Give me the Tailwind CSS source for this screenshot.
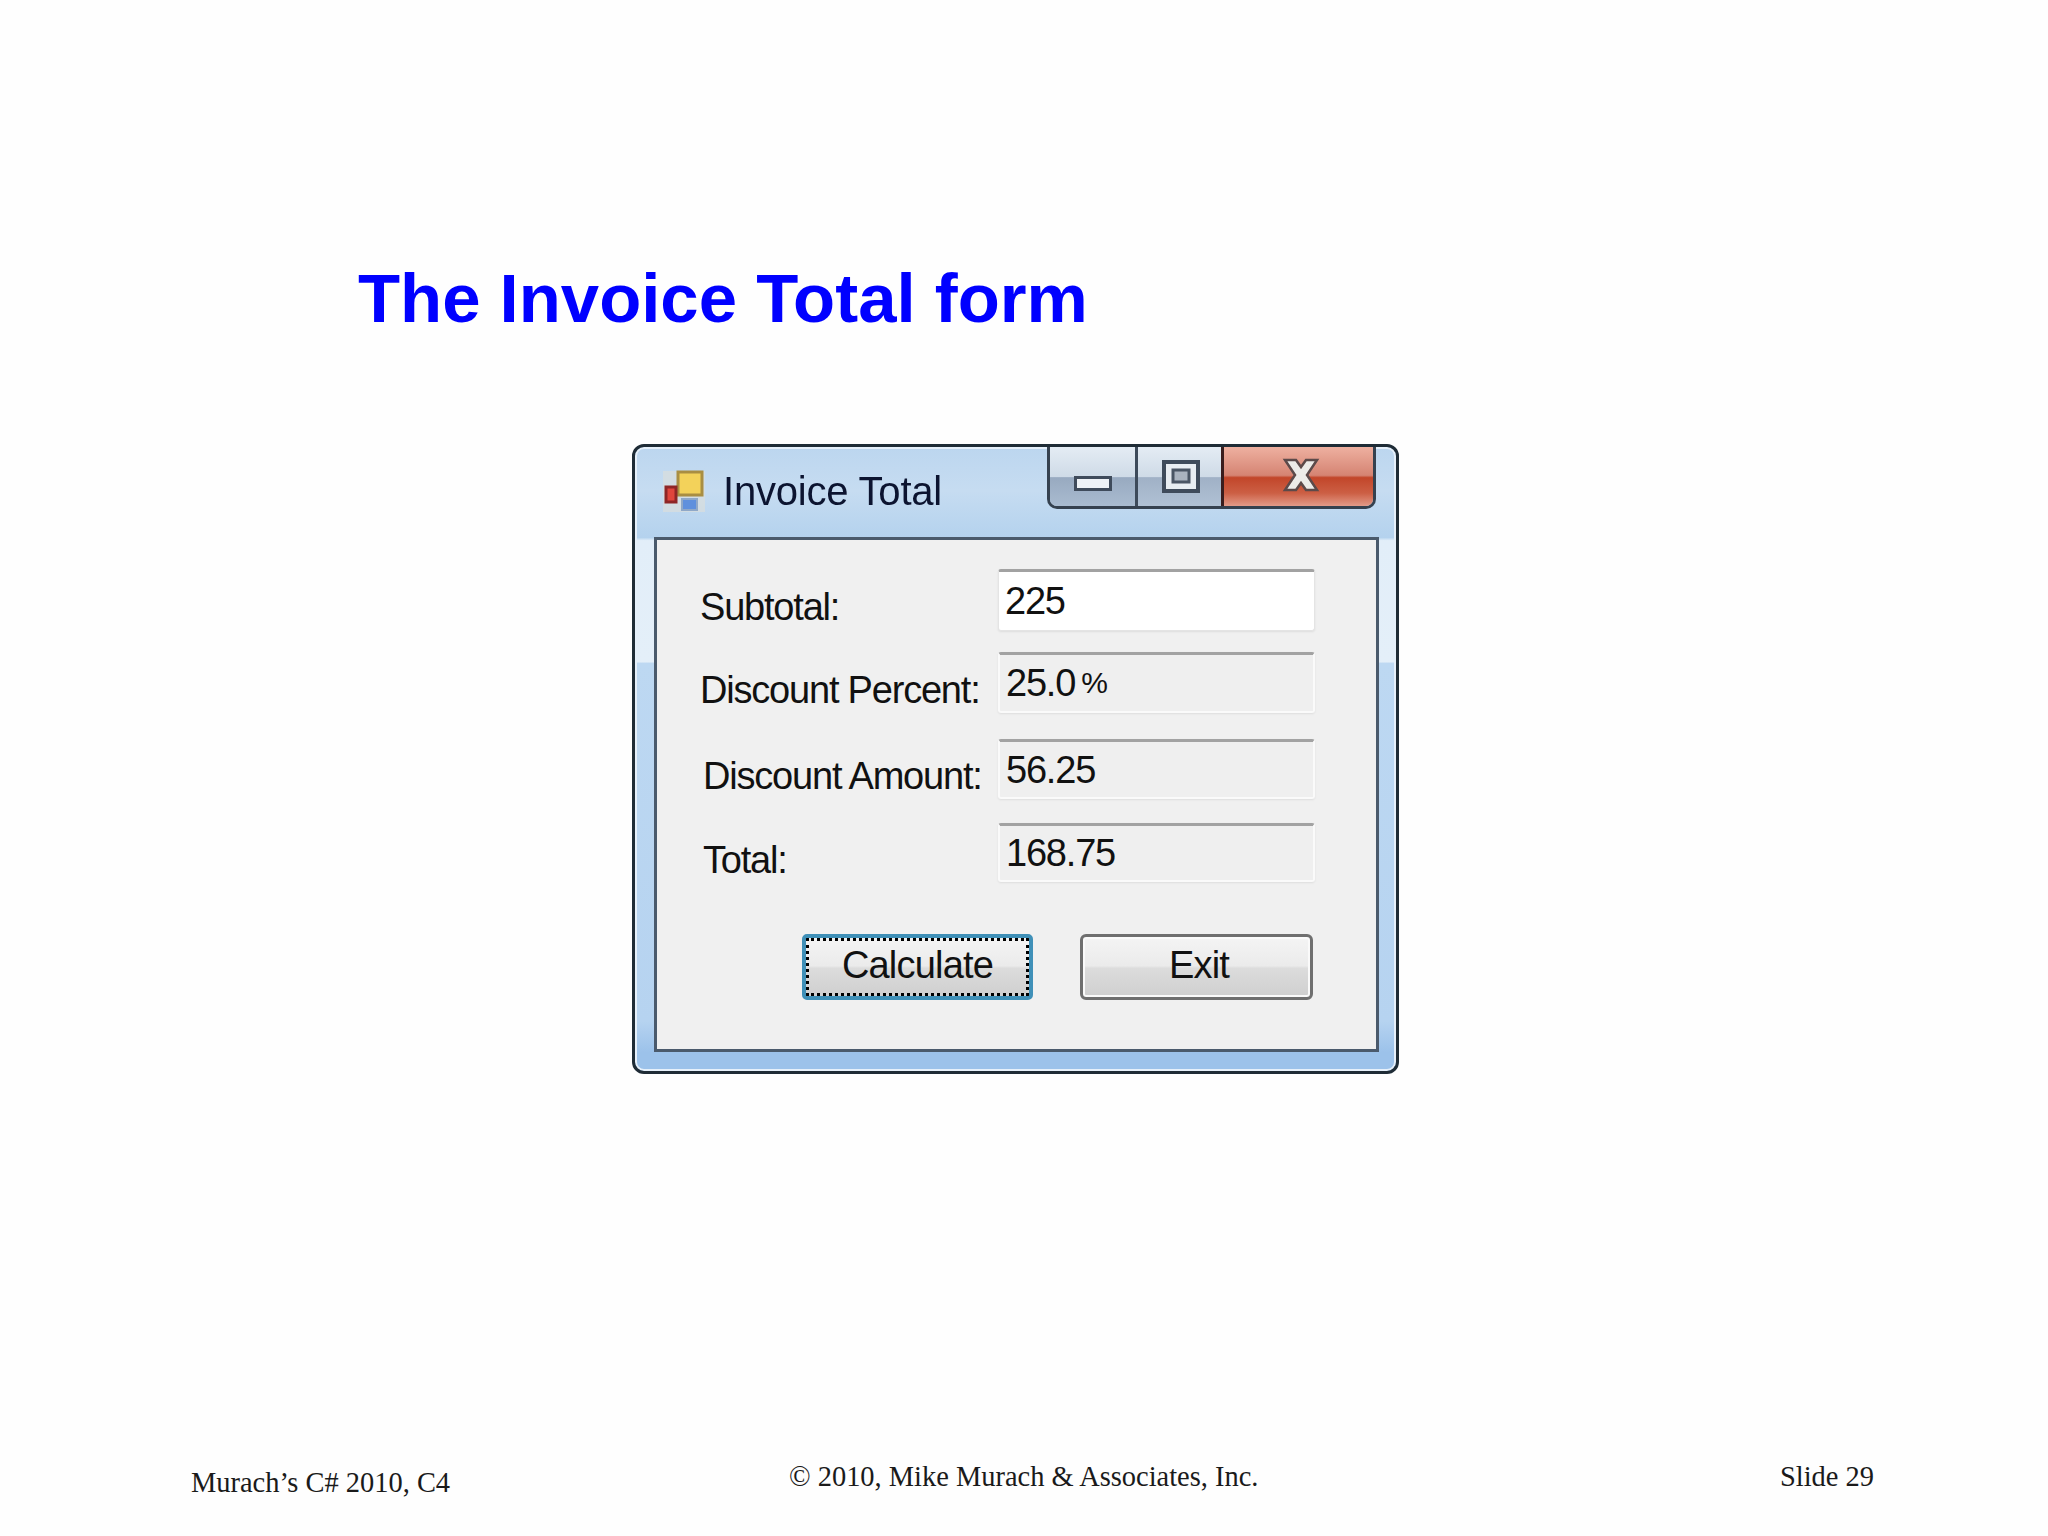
<!DOCTYPE html>
<html>
<head>
<meta charset="utf-8">
<script src="https://cdn.jsdelivr.net/npm/@tailwindcss/browser@4"></script>
</head>
<body class="m-0 bg-[#fefefe]">
<div class="flex h-[1536px] w-[2048px] flex-col bg-[#fefefe] font-['Liberation_Sans',Arial,sans-serif]">
  <h1 class="ml-[358px] mt-[259px] text-[68.9px] font-bold leading-[80px] text-[#0000ff]">The Invoice Total form</h1>

  <div class="ml-[632px] mt-[105px] flex h-[630px] w-[767px] flex-col rounded-[12px] border-[3px] border-[#1f2c36] bg-[linear-gradient(180deg,#bcd6ef_0%,#c6dcf1_7%,#b4d2ee_14.5%,#e2eef9_15%,#e4eff9_34.4%,#bdd8f2_34.7%,#b6d3f0_92%,#9cc2ea_97%,#9cc2ea_100%)] pl-[19px] pr-[17px] text-[#111111] shadow-[inset_0_0_0_2px_#e6f0fa] blur-[0.7px]">
    <div class="flex h-[90px] shrink-0 items-start justify-between">
      <div class="mt-[22px] flex items-center">
        <svg class="ml-[8px] h-[44px] w-[44px]" viewBox="0 0 44 44">
          <rect x="1" y="2" width="42" height="41" fill="#d8dedd" opacity="0.75"/>
          <rect x="16" y="3" width="24" height="23" fill="#f3d25a" stroke="#a98e42" stroke-width="3"/>
          <rect x="4" y="18" width="10" height="15" fill="#e0453c" stroke="#8e2626" stroke-width="3"/>
          <rect x="20" y="30" width="15" height="11" fill="#5f90dd" stroke="#8fa8c8" stroke-width="2"/>
        </svg>
        <span class="ml-[17px] text-[40px] leading-[44px] tracking-[-0.2px] text-[#0c1430]">Invoice Total</span>
      </div>
      <div class="mr-[3px] flex h-[62px] w-[329px] overflow-hidden rounded-b-[10px] border-x-[3px] border-b-[3px] border-[#35414f]">
        <div class="flex w-[88px] items-end justify-center border-r-[3px] border-[#3d4a5a] bg-[linear-gradient(180deg,#e4ecf4_0%,#cfdbe7_50%,#98aac0_52%,#a9bbd0_100%)] pb-[15px]">
          <svg class="h-[15px] w-[38px]" viewBox="0 0 38 15"><rect x="1.5" y="1.5" width="35" height="12" fill="#eef2f6" stroke="#3f4b5b" stroke-width="3"/></svg>
        </div>
        <div class="flex w-[86px] items-start justify-center border-r-[3px] border-[#3a1d1d] bg-[linear-gradient(180deg,#e4ecf4_0%,#cfdbe7_50%,#a0b1c6_52%,#b0c1d4_100%)] pl-[3px] pt-[13px]">
          <svg class="h-[33px] w-[38px]" viewBox="0 0 38 33"><rect x="2" y="2" width="34" height="29" fill="#e8edf2" stroke="#3f4b5b" stroke-width="4"/><rect x="11" y="10" width="16" height="12" fill="#aab3bf" stroke="#4a5564" stroke-width="3"/></svg>
        </div>
        <div class="flex flex-1 items-start justify-center bg-[linear-gradient(180deg,#eeb0a0_0%,#d58473_48%,#c2462a_52%,#cc5f44_78%,#e39a88_100%)] pl-[5px] pt-[11px]">
          <svg class="h-[34px] w-[38px]" viewBox="0 0 36 34"><path d="M2 2H13L18 9L23 2H34L24 17L34 32H23L18 25L13 32H2L12 17Z" fill="#ecebe8" stroke="#5c4a4a" stroke-width="2.5"/></svg>
        </div>
      </div>
    </div>

    <div class="flex h-[515px] flex-col border-[3px] border-[#4a5a6c] bg-[#f0f0f0] pl-[43px] text-[38px] leading-[40px] tracking-[-1.2px]">
      <div class="mt-[29px] flex h-[62px]">
        <span class="mt-[18px] w-[298px] shrink-0">Subtotal:</span>
        <div class="flex w-[317px] items-center rounded-[3px] border border-[#e4e4e4] border-t-[3px] border-t-[#a2a2a2] bg-white pl-[6px] shadow-[0_1px_2px_#dddddd]">225</div>
      </div>
      <div class="mt-[21px] flex h-[61px]">
        <span class="mt-[18px] w-[298px] shrink-0">Discount Percent:</span>
        <div class="flex w-[317px] items-center gap-[6px] rounded-[3px] border-[2px] border-[#fafafa] border-t-[3px] border-t-[#a2a2a2] bg-[#efefef] pl-[6px] shadow-[0_1px_2px_#dddddd]"><span>25.0</span><span class="text-[30px]">%</span></div>
      </div>
      <div class="mt-[26px] flex h-[60px]">
        <span class="mt-[17px] w-[298px] shrink-0 pl-[3px]">Discount Amount:</span>
        <div class="flex w-[317px] items-center rounded-[3px] border-[2px] border-[#fafafa] border-t-[3px] border-t-[#a2a2a2] bg-[#efefef] pl-[6px] shadow-[0_1px_2px_#dddddd]">56.25</div>
      </div>
      <div class="mt-[24px] flex h-[59px]">
        <span class="mt-[17px] w-[298px] shrink-0 pl-[3px]">Total:</span>
        <div class="flex w-[317px] items-center rounded-[3px] border-[2px] border-[#fafafa] border-t-[3px] border-t-[#a2a2a2] bg-[#efefef] pl-[6px] shadow-[0_1px_2px_#dddddd]">168.75</div>
      </div>
      <div class="ml-[102px] mt-[52px] flex gap-[47px] tracking-[-0.8px]">
        <div class="flex h-[66px] w-[231px] items-center justify-center rounded-[5px] border-[4px] border-[#3f90b8] bg-[linear-gradient(180deg,#f4f4f4_0%,#ebebeb_48%,#dcdcdc_52%,#cfcfcf_100%)] pb-[4px] outline-[3px] outline-offset-[-7px] outline-black outline-dotted">Calculate</div>
        <div class="flex h-[66px] w-[233px] items-center justify-center rounded-[6px] border-[3px] border-[#6f6f6f] bg-[linear-gradient(180deg,#f4f4f4_0%,#ebebeb_48%,#dcdcdc_52%,#cfcfcf_100%)] pb-[4px] pl-[5px] shadow-[inset_0_0_0_2px_#fafafa]">Exit</div>
      </div>
    </div>
  </div>

  <div class="mt-auto mb-[36px] flex items-start font-['Liberation_Serif',serif] text-[28.45px] leading-[34px] text-[#1a1a1a]">
    <span class="ml-[191px] mt-[6px] w-[598px]">Murach’s C# 2010, C4</span>
    <span class="w-[991px]">© 2010, Mike Murach &amp; Associates, Inc.</span>
    <span>Slide 29</span>
  </div>
</div>
</body>
</html>
